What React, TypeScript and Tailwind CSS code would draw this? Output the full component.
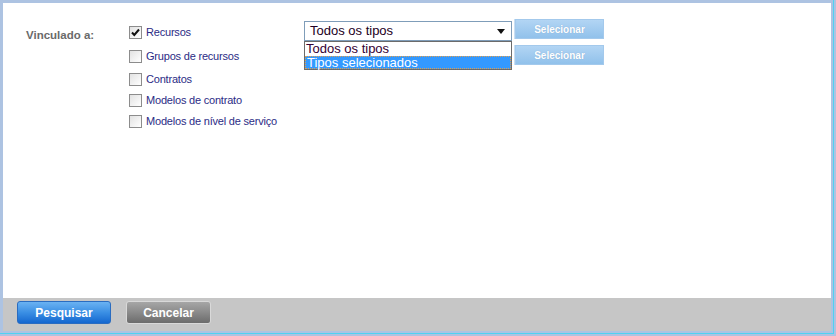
import { Fragment } from "react"

const items = [
  { label: "Recursos", checked: true, mt: "mt-0" },
  { label: "Grupos de recursos", checked: false, mt: "mt-[11px]" },
  { label: "Contratos", checked: false, mt: "mt-[10px]" },
  { label: "Modelos de contrato", checked: false, mt: "mt-[8px]" },
  { label: "Modelos de nível de serviço", checked: false, mt: "mt-[8px]" },
]

function Check({ checked }: { checked: boolean }) {
  return (
    <span className="flex h-[13px] w-[13px] shrink-0 items-center justify-center border border-[#8c8c8c] bg-gradient-to-br from-[#e2e2e2] to-white">
      {checked ? (
        <svg width="9" height="9" viewBox="0 0 9 9">
          <path d="M1 4.5 L3.3 7 L8 1.5" fill="none" stroke="#111" strokeWidth="2" />
        </svg>
      ) : null}
    </span>
  )
}

function SelButton() {
  return (
    <div className="flex h-[20px] w-[90px] items-center justify-center border-l border-[#c9dff3] bg-gradient-to-b from-[#b4d6f4] to-[#8fc0ea] shadow-[inset_0_0_0_1px_#a3c9ec] text-[10px] font-bold text-white [text-shadow:0_0_1px_#7fa6cc]">
      Selecionar
    </div>
  )
}

export default function App() {
  return (
    <div
      className="h-[336px] w-[836px] bg-[#adc3e2] pr-[2px] pb-[2px]"
      style={{ fontFamily: '"Liberation Sans", Arial, sans-serif' }}
    >
      <div className="flex h-full w-full flex-col border-r border-b border-[#4fd2f2] pl-[3px] pt-[3px] pr-[2px] pb-[2px]">
        <div className="flex flex-1 flex-col">
          <div className="flex flex-1 bg-white pl-[23px] pt-[16px]">
            <div className="w-[103px] pt-[8px] text-[11.5px] font-bold text-[#6a6a6a]">Vinculado a:</div>

            <div className="flex w-[175px] flex-col pt-[7px]">
              {items.map((it) => (
                <Fragment key={it.label}>
                  <div className={`flex h-[13px] items-center gap-[4px] ${it.mt}`}>
                    <Check checked={it.checked} />
                    <span className="whitespace-nowrap text-[11px] tracking-[-0.2px] text-[#2b2b85]">{it.label}</span>
                  </div>
                </Fragment>
              ))}
            </div>

            <div className="flex flex-col">
              <div className="flex items-start gap-[2px]">
                <div className="relative mt-[2px]">
                  <div className="flex h-[20px] w-[208px] items-center justify-between border border-[#7f9db9] bg-white pl-[5px] pr-[6px] text-[13px] text-[#220022]">
                    <span>Todos os tipos</span>
                    <svg width="8" height="5" viewBox="0 0 8 5">
                      <path d="M0 0 H8 L4 5 Z" fill="#111" />
                    </svg>
                  </div>
                  <div className="absolute left-0 top-[20px] z-10 w-[208px] border border-[#6b6b6b] bg-white text-[13px] leading-[13px]">
                    <div className="h-[14px] pl-[1px] text-[#330033]">Todos os tipos</div>
                    <div className="h-[13px] border border-dotted border-[#e0a050] bg-[#3399ff] pl-[1px] leading-[11px] text-white">
                      Tipos selecionados
                    </div>
                  </div>
                </div>
                <SelButton />
              </div>
              <div className="mt-[4px] flex items-start gap-[2px]">
                <div className="h-[20px] w-[208px] border border-[#7f9db9] bg-white" />
                <SelButton />
              </div>
            </div>
          </div>
          <div className="flex h-[33px] items-start gap-[15px] bg-[#c6c6c6] pl-[14px] pt-[3px]">
            <button className="h-[23px] w-[94px] rounded-[3px] border border-[#2a6cc0] bg-gradient-to-b from-[#6ab2f2] via-[#3a8fe4] to-[#1467cf] text-[12px] font-bold text-white">
              Pesquisar
            </button>
            <button className="h-[23px] w-[85px] rounded-[3px] border border-[#d9d9d9] bg-gradient-to-b from-[#a6a6a6] via-[#8a8a8a] to-[#6c6c6c] text-[12px] font-bold text-white">
              Cancelar
            </button>
          </div>
        </div>
      </div>
    </div>
  )
}
